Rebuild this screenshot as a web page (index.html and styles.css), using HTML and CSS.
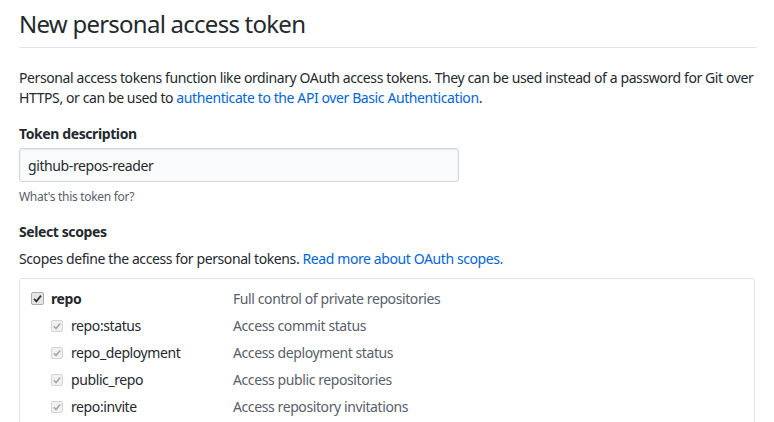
FILE: index.html
```html
<html>
<head>
<meta charset="UTF-8">
<title>New personal access token</title>
<link rel="stylesheet" href="styles.css">
</head>
<body>
<div class="page">
	<h1 class="pageHeading">New personal access token</h1>

	<p class="intro">
	Personal access tokens function like ordinary OAuth access tokens. They can be used instead of a password for Git over<br>
	HTTPS, or can be used to <a href="#">authenticate to the API over Basic Authentication</a>.
	</p>

	<div class="formGroup">
		<label class="fieldLabel" for="desc">Token description</label>
		<input class="textInput" id="desc" type="text" value="github-repos-reader">
		<div class="note">What's this token for?</div>
	</div>

	<div class="fieldLabel">Select scopes</div>
	<p class="scopeInfo">Scopes define the access for personal tokens. <a href="#">Read more about OAuth scopes.</a></p>

	<div class="scopeBox">
		<div class="scopeRow">
			<span class="check"><svg width="13" height="13" viewBox="0 0 13 13"><rect x="0.5" y="0.5" width="12" height="12" rx="1.5" fill="#e6e6e6" stroke="#adadad"/><path d="M3 6.8l2.4 2.5L10 3.6" fill="none" stroke="#333" stroke-width="1.8"/></svg></span>
			<span class="scopeName parent">repo</span>
			<span class="scopeDesc">Full control of private repositories</span>
		</div>
		<div class="scopeRow child">
			<span class="check"><svg width="12" height="12" viewBox="0 0 12 12"><rect x="0.5" y="0.5" width="11" height="11" rx="1.5" fill="#f1f1f1" stroke="#d3d3d3"/><path d="M2.8 6.2l2.2 2.3L9.2 3.4" fill="none" stroke="#a6a6a6" stroke-width="1.6"/></svg></span>
			<span class="scopeName">repo:status</span>
			<span class="scopeDesc">Access commit status</span>
		</div>
		<div class="scopeRow child">
			<span class="check"><svg width="12" height="12" viewBox="0 0 12 12"><rect x="0.5" y="0.5" width="11" height="11" rx="1.5" fill="#f1f1f1" stroke="#d3d3d3"/><path d="M2.8 6.2l2.2 2.3L9.2 3.4" fill="none" stroke="#a6a6a6" stroke-width="1.6"/></svg></span>
			<span class="scopeName">repo_deployment</span>
			<span class="scopeDesc">Access deployment status</span>
		</div>
		<div class="scopeRow child">
			<span class="check"><svg width="12" height="12" viewBox="0 0 12 12"><rect x="0.5" y="0.5" width="11" height="11" rx="1.5" fill="#f1f1f1" stroke="#d3d3d3"/><path d="M2.8 6.2l2.2 2.3L9.2 3.4" fill="none" stroke="#a6a6a6" stroke-width="1.6"/></svg></span>
			<span class="scopeName">public_repo</span>
			<span class="scopeDesc">Access public repositories</span>
		</div>
		<div class="scopeRow child">
			<span class="check"><svg width="12" height="12" viewBox="0 0 12 12"><rect x="0.5" y="0.5" width="11" height="11" rx="1.5" fill="#f1f1f1" stroke="#d3d3d3"/><path d="M2.8 6.2l2.2 2.3L9.2 3.4" fill="none" stroke="#a6a6a6" stroke-width="1.6"/></svg></span>
			<span class="scopeName">repo:invite</span>
			<span class="scopeDesc">Access repository invitations</span>
		</div>
	</div>
</div>
</body>
</html>
```

FILE: styles.css
```css
body{
	margin:0;
	background:#fff;
	color:#24292e;
	font-family:"Noto Sans", "Open Sans", sans-serif;
	font-size:14px;
	line-height:20px;
	letter-spacing:-0.4px;
	overflow:hidden;
}

a{
	color:#0366d6;
	text-decoration:none;
}

.page{
	width:738px;
	padding:9px 0 0 19px;
}

.pageHeading{
	margin:0;
	padding-bottom:8px;
	font-size:24px;
	font-weight:normal;
	line-height:30px;
	letter-spacing:-0.75px;
	border-bottom:1px solid #e1e4e8;
}

.intro{
	margin:20px 0 0 0;
	width:760px;
}

.formGroup{
	margin-top:16px;
}

.fieldLabel{
	display:block;
	font-weight:bold;
	margin-top:16px;
}

.formGroup .fieldLabel{
	margin-top:0;
}

.textInput{
	display:block;
	margin-top:4px;
	width:440px;
	height:34px;
	padding:6px 8px;
	box-sizing:border-box;
	font-family:inherit;
	font-size:14px;
	letter-spacing:-0.4px;
	color:#24292e;
	background:#fafbfc;
	border:1px solid #d1d5da;
	border-radius:3px;
	box-shadow:inset 0 1px 2px rgba(27,31,35,0.075);
}

.note{
	margin-top:6px;
	font-size:12px;
	line-height:18px;
	letter-spacing:-0.3px;
	color:#586069;
}

.scopeInfo{
	margin:7px 0 0 0;
}

.scopeBox{
	margin-top:9px;
	width:734px;
	height:160px;
	padding:6px 0 0 0;
	border:1px solid #e1e4e8;
	border-radius:3px;
}

.scopeRow{
	display:flex;
	align-items:center;
	height:27px;
	padding-left:11px;
}

.scopeRow.child{
	padding-left:31px;
}

.check{
	display:flex;
	width:20px;
}

.scopeName{
	width:182px;
}

.child .scopeName{
	width:162px;
}

.parent{
	font-weight:bold;
}

.scopeDesc{
	color:#586069;
}
```
